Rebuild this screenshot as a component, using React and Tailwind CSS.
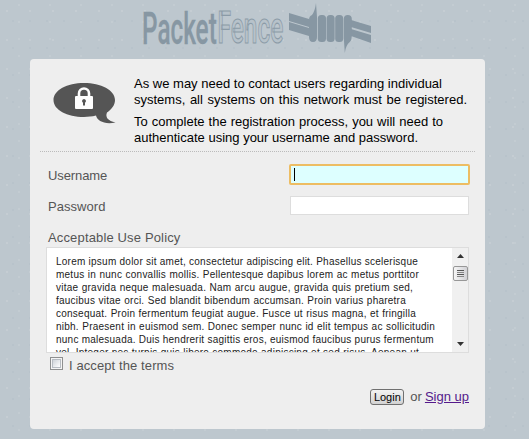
import React from "react";

const policy = [
  ["Lorem ipsum dolor sit amet, consectetur adipiscing elit. Phasellus scelerisque", "w-[362px]"],
  ["metus in nunc convallis mollis. Pellentesque dapibus lorem ac metus porttitor", "w-[363px]"],
  ["vitae gravida neque malesuada. Nam arcu augue, gravida quis pretium sed,", "w-[357px]"],
  ["faucibus vitae orci. Sed blandit bibendum accumsan. Proin varius pharetra", "w-[350px]"],
  ["consequat. Proin fermentum feugiat augue. Fusce ut risus magna, et fringilla", "w-[360px]"],
  ["nibh. Praesent in euismod sem. Donec semper nunc id elit tempus ac sollicitudin", "w-[379px]"],
  ["nunc malesuada. Duis hendrerit sagittis eros, euismod faucibus purus fermentum", "w-[376px]"],
  ["vel. Integer nec turpis quis libero commodo adipiscing et sed risus. Aenean ut", "w-[363px]"],
];

function Line({ children, width }) {
  return <span className={`block whitespace-nowrap [text-align-last:justify] ${width}`}>{children}</span>;
}

function Logo() {
  return (
    <svg width="529" height="59" viewBox="0 0 529 59" className="block">
      <g fontFamily="Roboto, sans-serif" fontSize="45">
        <text transform="translate(142 43.500) scale(.53 1)" textLength="141" lengthAdjust="spacingAndGlyphs" fontWeight="500" fill="#8797a3" stroke="#8797a3" strokeWidth=".3">Packet</text>
        <text transform="translate(217.500 43) scale(.54 1)" textLength="122" lengthAdjust="spacingAndGlyphs" fontWeight="500" fill="#b7c2ca" stroke="#8b9ba7" strokeWidth="1.100">Fence</text>
      </g>
      <g fill="#8797a3">
        <path d="M289 13l20 6v8l-20-6zM289 22l20 6v8l-20-6zM351 20l20 6v7l-20-6zM351 29l20 6v8l-20-7z" />
        <path d="M309 20q0-4 3-5q3-4 4-12l1 14v20q0 5-4 5t-4-5z" />
        <rect x="317.800" y="15" width="8.200" height="27" rx="3.500" />
        <rect x="326.600" y="15" width="8" height="27" rx="3.500" />
        <rect x="335.200" y="15" width="8" height="27" rx="3.500" />
        <path d="M343.800 19q0-4 4-4t4 4v17q0 4-2 6q-4 3-5 11l-1-15z" />
      </g>
    </svg>
  );
}

function SpeechLock() {
  return (
    <svg width="63" height="42" viewBox="0 0 63 42" className="block">
      <path d="M31 0C14 0 .5 7 .5 17s13.500 17 30.500 17c4 0 8-.3 12-1.400C44 38 52 42 62.500 39.500C55 38 52 34 54 29.500C59 26 62 22 62 17C62 7 48 0 31 0z" fill="#555" />
      <path d="M26 15v-4.500a5 5 0 0 1 10 0v4.500" fill="none" stroke="#fff" strokeWidth="2.600" />
      <rect x="22" y="13" width="18" height="13" rx="1" fill="#fff" />
      <path d="M31 16a2 2 0 0 1 1 3.700v2.800h-2v-2.800a2 2 0 0 1 1-3.700z" fill="#555" />
    </svg>
  );
}

function ScrollBar() {
  return (
    <div className="flex w-[16px] shrink-0 flex-col items-center bg-[#f0f0f0] pt-[6px]">
      <svg width="7" height="5" viewBox="0 0 7 5"><path d="M0 4L3.500 0L7 4z" fill="#333" /></svg>
      <div className="mt-[7px] flex h-[15px] w-[15px] shrink-0 flex-col items-center justify-center gap-px rounded-[2px] border border-[#979797] bg-gradient-to-r from-[#f5f5f5] to-[#d2d2d6]">
        <i className="h-px w-[7px] bg-[#555]" />
        <i className="h-px w-[7px] bg-[#888]" />
        <i className="h-px w-[7px] bg-[#555]" />
        <i className="h-px w-[7px] bg-[#888]" />
      </div>
      <svg className="mt-auto mb-[6px]" width="7" height="4" viewBox="0 0 7 4"><path d="M0 0h7L3.500 4z" fill="#333" /></svg>
    </div>
  );
}

export default function App() {
  return (
    <div className="h-[439px] w-[529px] overflow-hidden bg-[#bdc7ce] bg-[radial-gradient(circle_at_7px_11px,#c5cdd3_.8px,transparent_1px),radial-gradient(circle_at_19px_5px,#c3ccd2_.8px,transparent_1px),radial-gradient(circle_at_13px_21px,#b8c3cb_.8px,transparent_1px)] bg-size-[23px_29px,31px_17px,17px_27px] font-['Liberation_Sans',Arial,sans-serif] text-[13px] text-[#555]">
      <Logo />
      <main className="ml-[30px] h-[370px] w-[455px] rounded-[4px] bg-[#eee] px-[10px] pt-[17px]">
        <section className="flex h-[76px] border-b border-dotted border-[#bbb] pl-[13px]">
          <div className="w-[81px] shrink-0 pt-[7px]"><SpeechLock /></div>
          <div className="leading-[16px] text-black">
            <Line width="w-[308px]">As we may need to contact users regarding individual</Line>
            <Line width="w-[333px]">systems, all systems on this network must be registered.</Line>
            <div className="h-[6px]" />
            <Line width="w-[309px]">To complete the registration process, you will need to</Line>
            <Line width="w-[284px]">authenticate using your username and password.</Line>
          </div>
        </section>
        <form className="pt-[12px]" onSubmit={(e) => e.preventDefault()}>
          <div className="flex h-[21px] items-center justify-between pr-[5px] pl-[8px]">
            <span className="pt-[2px] tracking-[-.1px]">Username</span>
            <div className="flex h-[21px] w-[181px] items-center rounded-[2px] border-2 border-[#edbd63] bg-[#dff] pl-[3px]">
              <i className="h-[13px] w-px bg-black" />
            </div>
          </div>
          <div className="mt-[11px] flex h-[19px] items-center justify-between pr-[6px] pl-[8px]">
            <span className="pt-[2px] tracking-[.05px]">Password</span>
            <div className="h-[19px] w-[179px] border border-[#ddd] bg-white" />
          </div>
          <div className="mt-[14px] ml-[8px] h-[18px] leading-[18px] tracking-[.15px]">Acceptable Use Policy</div>
          <div className="ml-[6px] flex h-[106px] w-[423px] justify-between overflow-hidden border border-[#ddd] bg-white">
            <div className="pt-[7px] pl-[9px] text-[10px] leading-[13px] tracking-[.24px] text-[#222]">
              {policy.map(([text, width]) => <Line key={text} width={width}>{text}</Line>)}
            </div>
            <ScrollBar />
          </div>
          <label className="mt-[4px] ml-[10px] flex items-start gap-[6px]">
            <span className="flex h-[13px] w-[13px] items-center justify-center border border-[#8e8f8f] bg-[#f4f4f4]">
              <i className="h-[9px] w-[9px] border border-[#b7bcc2] bg-gradient-to-br from-[#cfd3d8] to-white" />
            </span>
            <span className="leading-[18px] tracking-[.1px]">I accept the terms</span>
          </label>
          <div className="mt-[13px] flex h-[18px] items-center justify-end pr-[6px]">
            <button className="h-[16px] w-[34px] rounded-[3px] border border-[#707070] bg-gradient-to-b from-[#f3f3f3] to-[#d2d2d2] text-[11px] leading-[14px] text-black">Login</button>
            <span className="ml-[6px]">or</span>
            <a href="#" className="ml-[3px] text-[#551a8b] underline">Sign up</a>
          </div>
        </form>
      </main>
    </div>
  );
}
